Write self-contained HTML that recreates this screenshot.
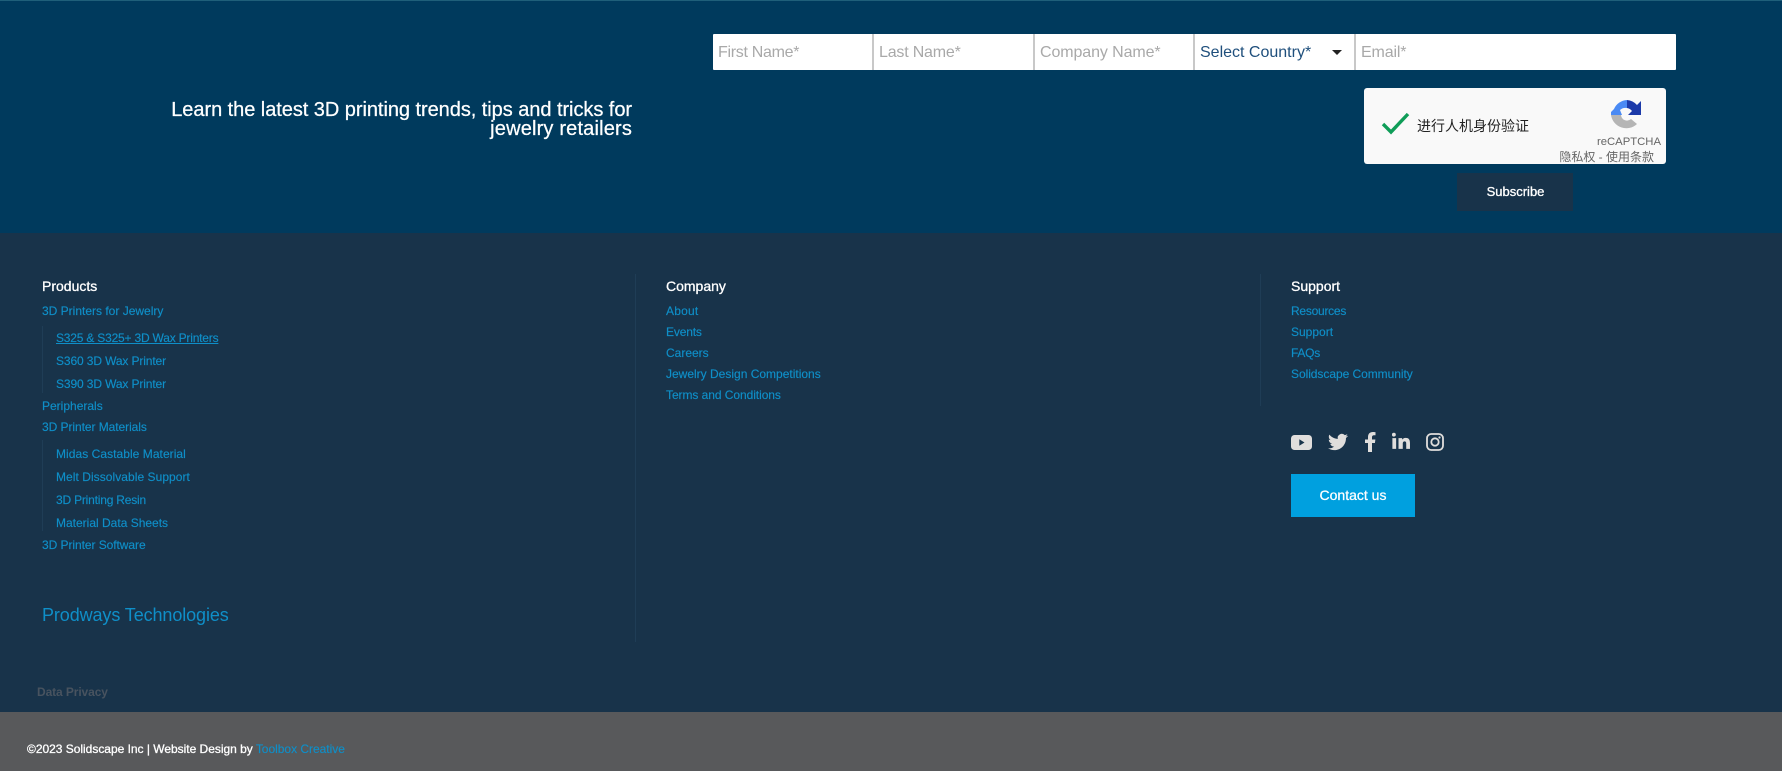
<!DOCTYPE html>
<html lang="en">
<head>
<meta charset="utf-8">
<title>Solidscape Footer</title>
<style>
html,body{margin:0;padding:0;width:1782px;height:771px;overflow:hidden;background:#18334a}
body{position:relative;font-family:"Liberation Sans","Noto Sans CJK SC",sans-serif}
a{color:inherit;text-decoration:none}
.b{position:absolute;display:block}
.t{position:absolute;display:block;white-space:nowrap;line-height:20px;height:20px}
.l{color:#0f8fc8;font-size:12px;-webkit-text-stroke:.15px #0f8fc8}
.h{color:#fff;font-size:14px;-webkit-text-stroke:.3px #fff}
.ph{color:#a9a9a9;font-size:16px}
.sep{position:absolute;background:#c8c8c8;width:2px;top:34px;height:36px}
.v{position:absolute;width:1px;background:#1f3d56}
svg{position:absolute;display:block}
</style>
</head>
<body>
<div class="b" style="left:0;top:0;width:1782px;height:233px;background:#003a5d"></div>
<div class="b" style="left:0;top:0;width:1782px;height:1px;background:#1f5f7a"></div>
<div class="b" style="left:0;top:712px;width:1782px;height:59px;background:#58595b"></div>

<div class="t" style="right:1150px;top:100px;color:#fff;font-size:20px;letter-spacing:-.05px;-webkit-text-stroke:.25px #fff">Learn the latest 3D printing trends, tips and tricks for</div>
<div class="t" style="right:1150px;top:119px;color:#fff;font-size:20px;letter-spacing:.17px;-webkit-text-stroke:.25px #fff">jewelry retailers</div>

<div class="b" style="left:713px;top:34px;width:963px;height:36px;background:#fff;border-radius:1px"></div>
<div class="sep" style="left:872px"></div>
<div class="sep" style="left:1033px"></div>
<div class="sep" style="left:1193px"></div>
<div class="sep" style="left:1354px"></div>
<div class="t ph" style="left:718px;top:43px;letter-spacing:-.3px">First Name*</div>
<div class="t ph" style="left:879px;top:43px;letter-spacing:-.2px">Last Name*</div>
<div class="t ph" style="left:1040px;top:43px;letter-spacing:-.1px">Company Name*</div>
<div class="t" style="left:1200px;top:43px;font-size:16px;color:#1f4f7c">Select Country*</div>
<div class="b" style="left:1332px;top:50px;width:0;height:0;border-left:5px solid transparent;border-right:5px solid transparent;border-top:5px solid #222"></div>
<div class="t ph" style="left:1361px;top:43px;letter-spacing:-.15px">Email*</div>

<div class="b" style="left:1364px;top:88px;width:302px;height:76px;background:#f9f9f9;border-radius:3px"></div>
<svg style="left:1380px;top:110px" width="32" height="26" viewBox="0 0 32 26"><path d="M3 14l8 8L28 4" fill="none" stroke="#0f9d58" stroke-width="3.400"/></svg>
<div class="t" style="left:1417px;top:116px;color:#222;font-family:'Noto Sans CJK SC',sans-serif;font-size:14px">进行人机身份验证</div>
<svg style="left:1609px;top:98px" width="34" height="34" viewBox="0 0 34 34">
<path d="M2 17H12A6 6 0 0 0 22 21L28 26A15.500 15.500 0 0 1 2 17z" fill="#b5b5b5"/>
<path d="M2 17V14L5 11A15 15 0 0 1 18 2V10A8 8 0 0 0 11 12L13 17z" fill="#4a8af4"/>
<path d="M18 2A15 15 0 0 1 28 7L32 3V17H19L23 13A8 8 0 0 0 18 10z" fill="#1c3aa9"/>
</svg>
<div class="t" style="right:121px;top:132px;font-size:11.300px;color:#666">reCAPTCHA</div>
<div class="t" style="right:128px;top:147px;font-size:12px;color:#666;font-family:'Liberation Sans','Noto Sans CJK SC',sans-serif">隐私权 - 使用条款</div>

<div class="b" style="left:1457px;top:173px;width:116px;height:38px;background:#18334a"></div>
<div class="t" style="left:1457px;width:117px;top:182px;text-align:center;color:#fff;font-size:13px;-webkit-text-stroke:.3px #fff">Subscribe</div>

<div class="v" style="left:42px;top:326px;height:67px"></div>
<div class="v" style="left:42px;top:440px;height:91px"></div>
<div class="v" style="left:635px;top:274px;height:368px"></div>
<div class="v" style="left:1260px;top:274px;height:132px"></div>

<div class="t h" style="left:42px;top:276px">Products</div>
<a class="t l" style="left:42px;top:301px">3D Printers for Jewelry</a>
<a class="t l" style="left:56px;top:328px;text-decoration:underline;letter-spacing:-.2px">S325 &amp; S325+ 3D Wax Printers</a>
<a class="t l" style="left:56px;top:351px;letter-spacing:-.12px">S360 3D Wax Printer</a>
<a class="t l" style="left:56px;top:374px;letter-spacing:-.12px">S390 3D Wax Printer</a>
<a class="t l" style="left:42px;top:396px">Peripherals</a>
<a class="t l" style="left:42px;top:417px;letter-spacing:-.06px">3D Printer Materials</a>
<a class="t l" style="left:56px;top:444px;letter-spacing:.05px">Midas Castable Material</a>
<a class="t l" style="left:56px;top:467px;letter-spacing:.05px">Melt Dissolvable Support</a>
<a class="t l" style="left:56px;top:490px;letter-spacing:-.2px">3D Printing Resin</a>
<a class="t l" style="left:56px;top:513px">Material Data Sheets</a>
<a class="t l" style="left:42px;top:535px;letter-spacing:-.06px">3D Printer Software</a>
<a class="t" style="left:42px;top:605px;font-size:18px;letter-spacing:-.1px;color:#0f8fc8">Prodways Technologies</a>

<div class="t h" style="left:666px;top:276px">Company</div>
<a class="t l" style="left:666px;top:301px;letter-spacing:.2px">About</a>
<a class="t l" style="left:666px;top:322px;letter-spacing:-.15px">Events</a>
<a class="t l" style="left:666px;top:343px">Careers</a>
<a class="t l" style="left:666px;top:364px">Jewelry Design Competitions</a>
<a class="t l" style="left:666px;top:385px;letter-spacing:-.06px">Terms and Conditions</a>

<div class="t h" style="left:1291px;top:276px">Support</div>
<a class="t l" style="left:1291px;top:301px;letter-spacing:-.25px">Resources</a>
<a class="t l" style="left:1291px;top:322px">Support</a>
<a class="t l" style="left:1291px;top:343px;letter-spacing:-.25px">FAQs</a>
<a class="t l" style="left:1291px;top:364px;letter-spacing:-.05px">Solidscape Community</a>

<svg style="left:1291px;top:435px" width="21" height="15" viewBox="0 0 21 15"><rect x="0" y="0" width="21" height="15" rx="3.500" fill="#e0dedc"/><path d="M8.300 4.200v6.500l5.200-3.250z" fill="#18334a"/></svg>
<svg style="left:1328px;top:432px" width="20" height="20" viewBox="0 0 24 24"><path fill="#e0dedc" d="M23.950 4.570a10 10 0 0 1-2.820.77 4.960 4.960 0 0 0 2.160-2.720c-.95.550-2 .960-3.130 1.190a4.920 4.920 0 0 0-8.380 4.480C7.690 8.090 4.070 6.130 1.640 3.160a4.820 4.820 0 0 0-.670 2.480c0 1.710.870 3.210 2.190 4.100a4.900 4.900 0 0 1-2.230-.620v.060a4.920 4.920 0 0 0 3.950 4.830 5 5 0 0 1-2.210.080 4.940 4.940 0 0 0 4.600 3.420A9.870 9.870 0 0 1 0 19.540a14 14 0 0 0 7.560 2.210c9.050 0 14-7.500 14-13.980 0-.210 0-.420-.020-.630a9.940 9.940 0 0 0 2.460-2.550z"/></svg>
<svg style="left:1365px;top:432px" width="11" height="20" viewBox="0 0 11 20"><path fill="#e0dedc" d="M3 20V11H0V7.500h3V5c0-3.200 1.900-5 4.800-5 1.300 0 2.700.200 2.700.200v3.100H9c-1.500 0-2 .900-2 1.900v2.300h3.400L9.900 11H7v9z"/></svg>
<svg style="left:1392px;top:432px" width="18" height="18" viewBox="0 0 23.500 23.500"><path fill="#e0dedc" d="M4.980 3.500a2.500 2.500 0 1 1-5 0 2.500 2.500 0 0 1 5 0zM.5 8h4.900v14H.5zM8.500 8h4.700v2h.070c.650-1.200 2.200-2.400 4.500-2.400 4.800 0 5.700 3.100 5.700 7.200V22h-4.900v-6.300c0-1.500 0-3.400-2.100-3.400s-2.400 1.600-2.400 3.300V22H8.500z"/></svg>
<svg style="left:1426px;top:433px" width="18" height="18" viewBox="0 0 18 18"><rect x="1" y="1" width="16" height="16" rx="4.200" fill="none" stroke="#e0dedc" stroke-width="1.800"/><circle cx="9" cy="9" r="3.700" fill="none" stroke="#e0dedc" stroke-width="1.800"/><circle cx="13.500" cy="4.500" r="1.100" fill="#e0dedc"/></svg>

<a class="b" style="left:1291px;top:474px;width:124px;height:43px;background:#00a0df"></a>
<div class="t" style="left:1291px;width:124px;top:485px;text-align:center;color:#fff;font-size:14px;-webkit-text-stroke:.25px #fff">Contact us</div>

<a class="t" style="left:37px;top:682px;font-size:12px;font-weight:bold;letter-spacing:-.1px;color:#48535f">Data Privacy</a>
<div class="t" style="left:27px;top:739px;font-size:12px;color:#fff;letter-spacing:-.02px;-webkit-text-stroke:.3px #fff">©2023 Solidscape Inc | Website Design by <a style="color:#0f8fc8;-webkit-text-stroke:.15px #0f8fc8">Toolbox Creative</a></div>
</body>
</html>
